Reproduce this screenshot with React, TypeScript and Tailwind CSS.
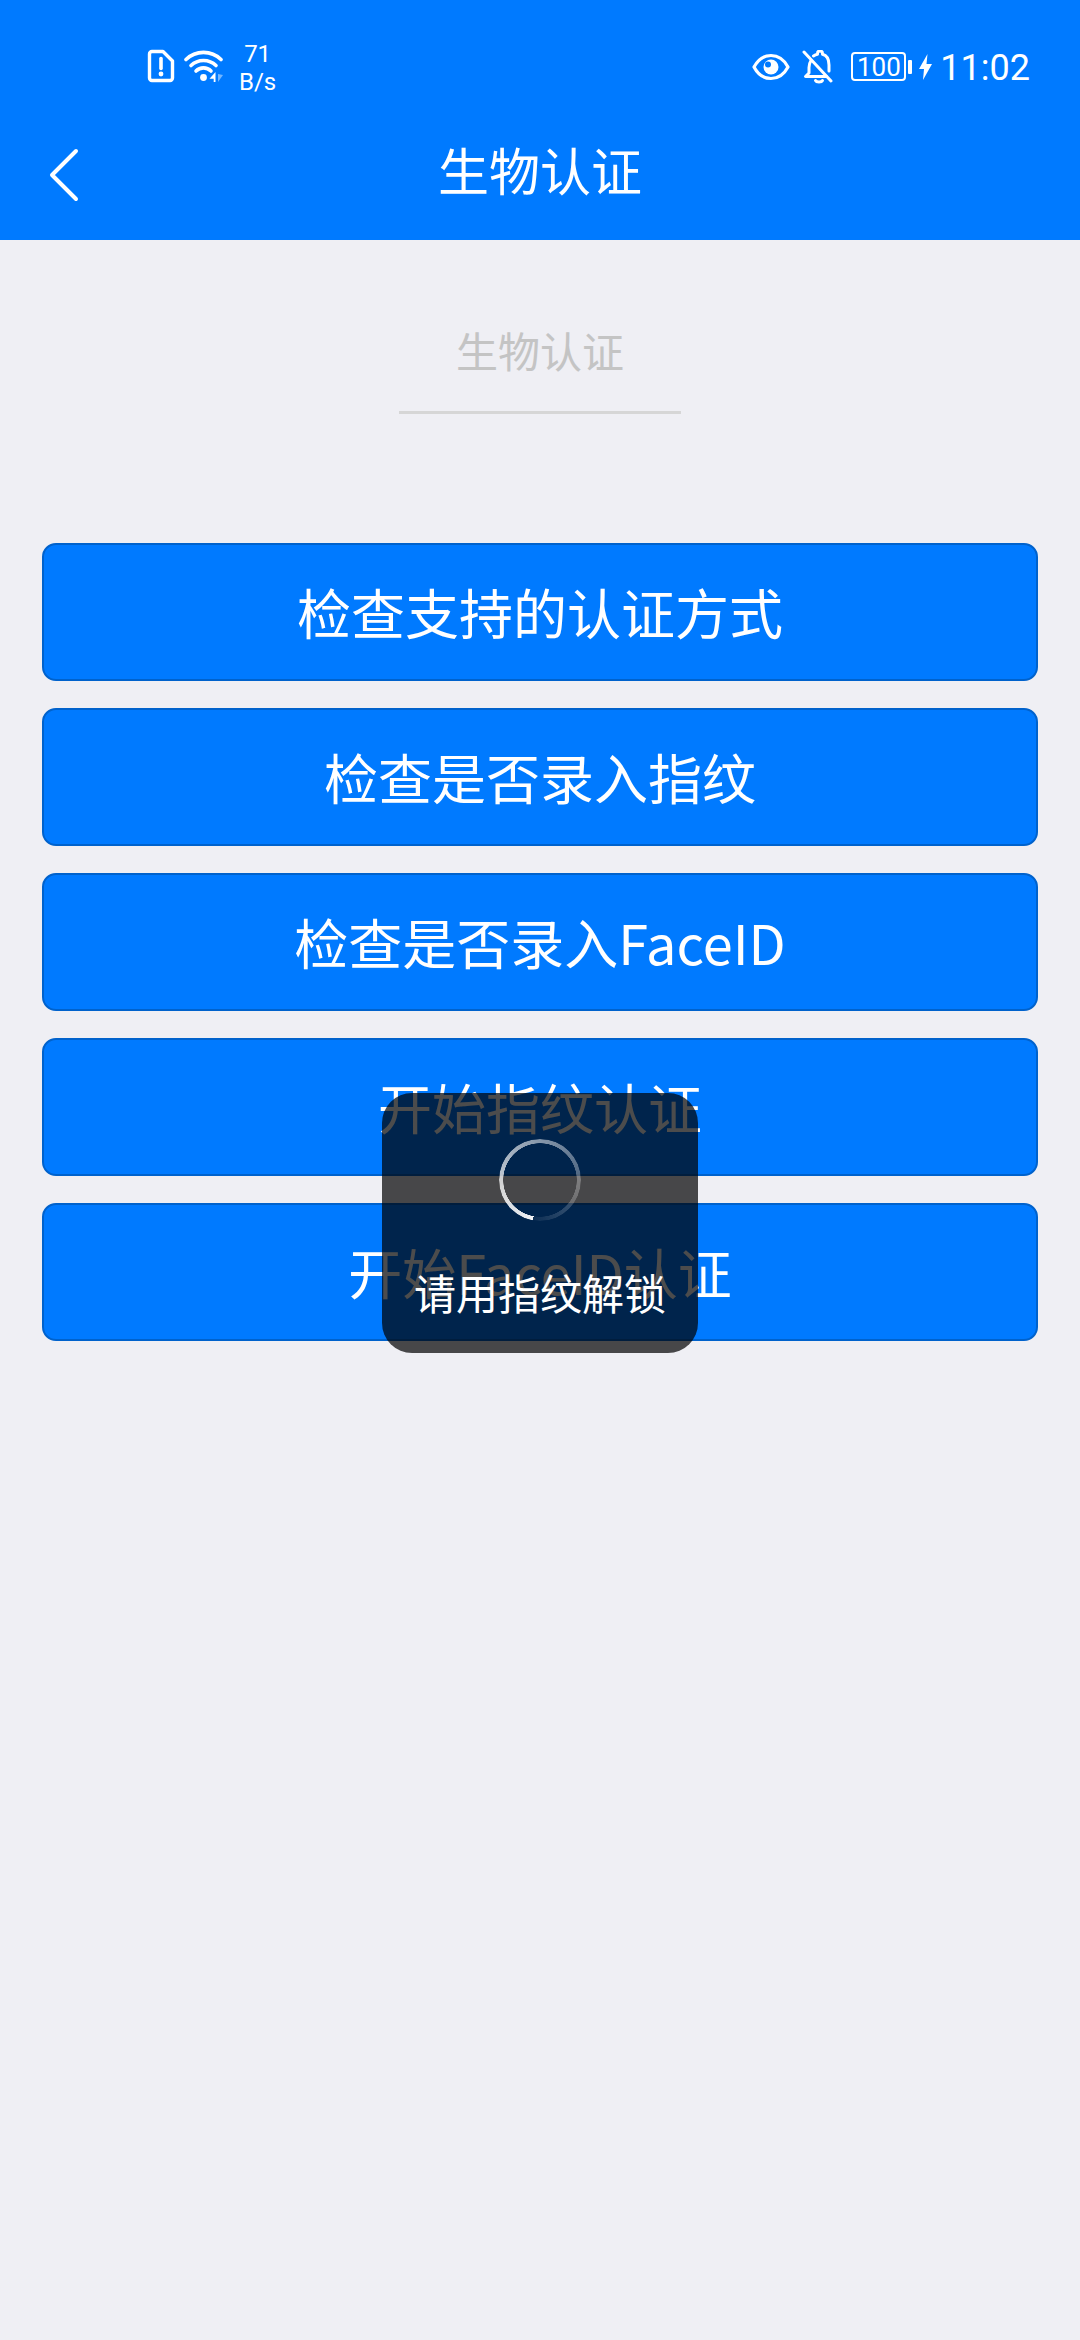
import React from 'react';

const labels = ['检查支持的认证方式', '检查是否录入指纹', '检查是否录入FaceID', '开始指纹认证', '开始FaceID认证'];

const SimAlert = () => (
  <svg width="28" height="34" viewBox="0 0 28 34" fill="none">
    <path d="M5 2.500h11l9.500 9.500v17a2.500 2.500 0 0 1-2.500 2.500H5A2.500 2.500 0 0 1 2.500 29V5A2.500 2.500 0 0 1 5 2.500z" stroke="white" strokeWidth="3.400" strokeLinejoin="round" />
    <path d="M14 9.500v10" stroke="white" strokeWidth="3.600" strokeLinecap="round" />
    <circle cx="14" cy="25" r="2.400" fill="white" />
  </svg>
);

const WifiIcon = () => (
  <svg width="42" height="34" viewBox="0 0 42 34" fill="none">
    <path d="M2 10.500A25 25 0 0 1 37 10.500" stroke="white" strokeWidth="3.600" strokeLinecap="round" />
    <path d="M7 16.500A18 18 0 0 1 32 16.500" stroke="white" strokeWidth="3.600" strokeLinecap="round" />
    <path d="M12 22A10.500 10.500 0 0 1 27 22" stroke="white" strokeWidth="3.600" strokeLinecap="round" />
    <circle cx="19.500" cy="28.500" r="3.400" fill="white" />
    <path d="M31.500 23v10h-1.800v-3.200h-4.200z" fill="white" />
    <path d="M34 25v8l5-7z" fill="white" fillOpacity="0.45" />
  </svg>
);

const EyeIcon = () => (
  <svg width="38" height="28" viewBox="0 0 38 28" fill="none">
    <path d="M2 14C6 6.500 12 2.500 19 2.500S32 6.500 36 14c-4 7.500-10 11.500-17 11.500S6 21.500 2 14z" stroke="white" strokeWidth="3.200" strokeLinejoin="round" />
    <circle cx="19" cy="14" r="7.500" fill="white" />
    <circle cx="16" cy="11.500" r="3" fill="#007aff" />
  </svg>
);

const BellOff = () => (
  <svg width="32" height="34" viewBox="0 0 32 34" fill="none">
    <path d="M2 2l27 29" stroke="white" strokeWidth="3" strokeLinecap="round" />
    <path d="M9 10.500C7.700 12.500 7 15 7 17.500V23l-3.500 3.500h21" stroke="white" strokeWidth="3" strokeLinejoin="round" strokeLinecap="round" />
    <path d="M11.500 6C13 5 14.500 4.500 15.500 4.300V3.500a2.500 2.500 0 0 1 5 0v.8C25 5.500 27 10 27 15v6" stroke="white" strokeWidth="3" strokeLinejoin="round" strokeLinecap="round" />
    <path d="M13.500 30.500c1 2 6 2 7 0" stroke="white" strokeWidth="3" strokeLinecap="round" />
  </svg>
);

const Bolt = () => (
  <svg width="13" height="26" viewBox="0 0 13 26" fill="white">
    <path d="M8.500 0L0 15h5l-1 11 9-16H7.500z" />
  </svg>
);

export default function App() {
  return (
    <div className="relative w-[1080px] h-[2340px] overflow-hidden bg-[#efeff4] font-['Noto_Sans_CJK_SC','Noto_Sans',sans-serif]">
      <header className="h-[240px] bg-[#007aff] text-white">
        {/* status bar */}
        <div className="pt-[28px] h-[104px] pl-[147px] pr-[50px] flex items-center font-['Roboto',sans-serif]">
          <SimAlert />
          <div className="ml-[9px]">
            <WifiIcon />
          </div>
          <div className="ml-[13px] mt-[3px] flex flex-col items-center text-[24px] leading-[28px] font-normal">
            <span>71</span>
            <span>B/s</span>
          </div>
          <div className="ml-auto mt-[1px] flex items-center">
            <EyeIcon />
            <div className="ml-[12px]">
              <BellOff />
            </div>
            <div className="ml-[17px] w-[55px] h-[29px] rounded-[4px] border-2 border-white flex items-center justify-center text-[26px] leading-none font-normal">
              100
            </div>
            <div className="ml-[2px] w-[4px] h-[14px] rounded-[1px] bg-white" />
            <div className="ml-[7px]">
              <Bolt />
            </div>
            <span className="ml-[8px] mt-[2px] text-[36px] leading-none font-normal">11:02</span>
          </div>
        </div>
        {/* nav bar */}
        <div className="relative h-[136px] flex items-center justify-center">
          <svg className="absolute left-[48px] top-[44px]" width="32" height="54" viewBox="0 0 32 54" fill="none">
            <path d="M28 3L4 27l24 24" stroke="white" strokeWidth="4" strokeLinecap="round" strokeLinejoin="round" />
          </svg>
          <h1 className="text-[51px] leading-none font-normal -mt-[6px]">生物认证</h1>
        </div>
      </header>

      <main className="flex flex-col items-center">
        <div className="mt-[60px] w-[282px] h-[114px] pb-[12px] border-b-[3px] border-[#d6d6d6] flex items-center justify-center text-[42px] leading-none text-[#c4c4c4]">
          生物认证
        </div>
        <div className="mt-[129px] w-[996px] flex flex-col gap-[27px]">
          {labels.map((label) => (
            <button
              key={label}
              className="h-[138px] rounded-[14px] bg-[#007aff] border-2 border-[#0062cc] text-white text-[54px] leading-none flex items-center justify-center"
            >
              {label}
            </button>
          ))}
        </div>
      </main>

      {/* fingerprint toast */}
      <div className="absolute left-[382px] top-[1093px] w-[316px] h-[260px] rounded-[30px] bg-black/70 flex flex-col items-center text-white">
        <div className="mt-[46px] w-[82px] h-[82px] rounded-full bg-[conic-gradient(from_190deg,rgba(255,255,255,0.95),rgba(255,255,255,0.5)_50%,rgba(255,255,255,0.05)_100%)] [mask-image:radial-gradient(circle,transparent_36.500px,black_37px)]" />
        <span className="mt-[50px] text-[42px] leading-none">请用指纹解锁</span>
      </div>
    </div>
  );
}
